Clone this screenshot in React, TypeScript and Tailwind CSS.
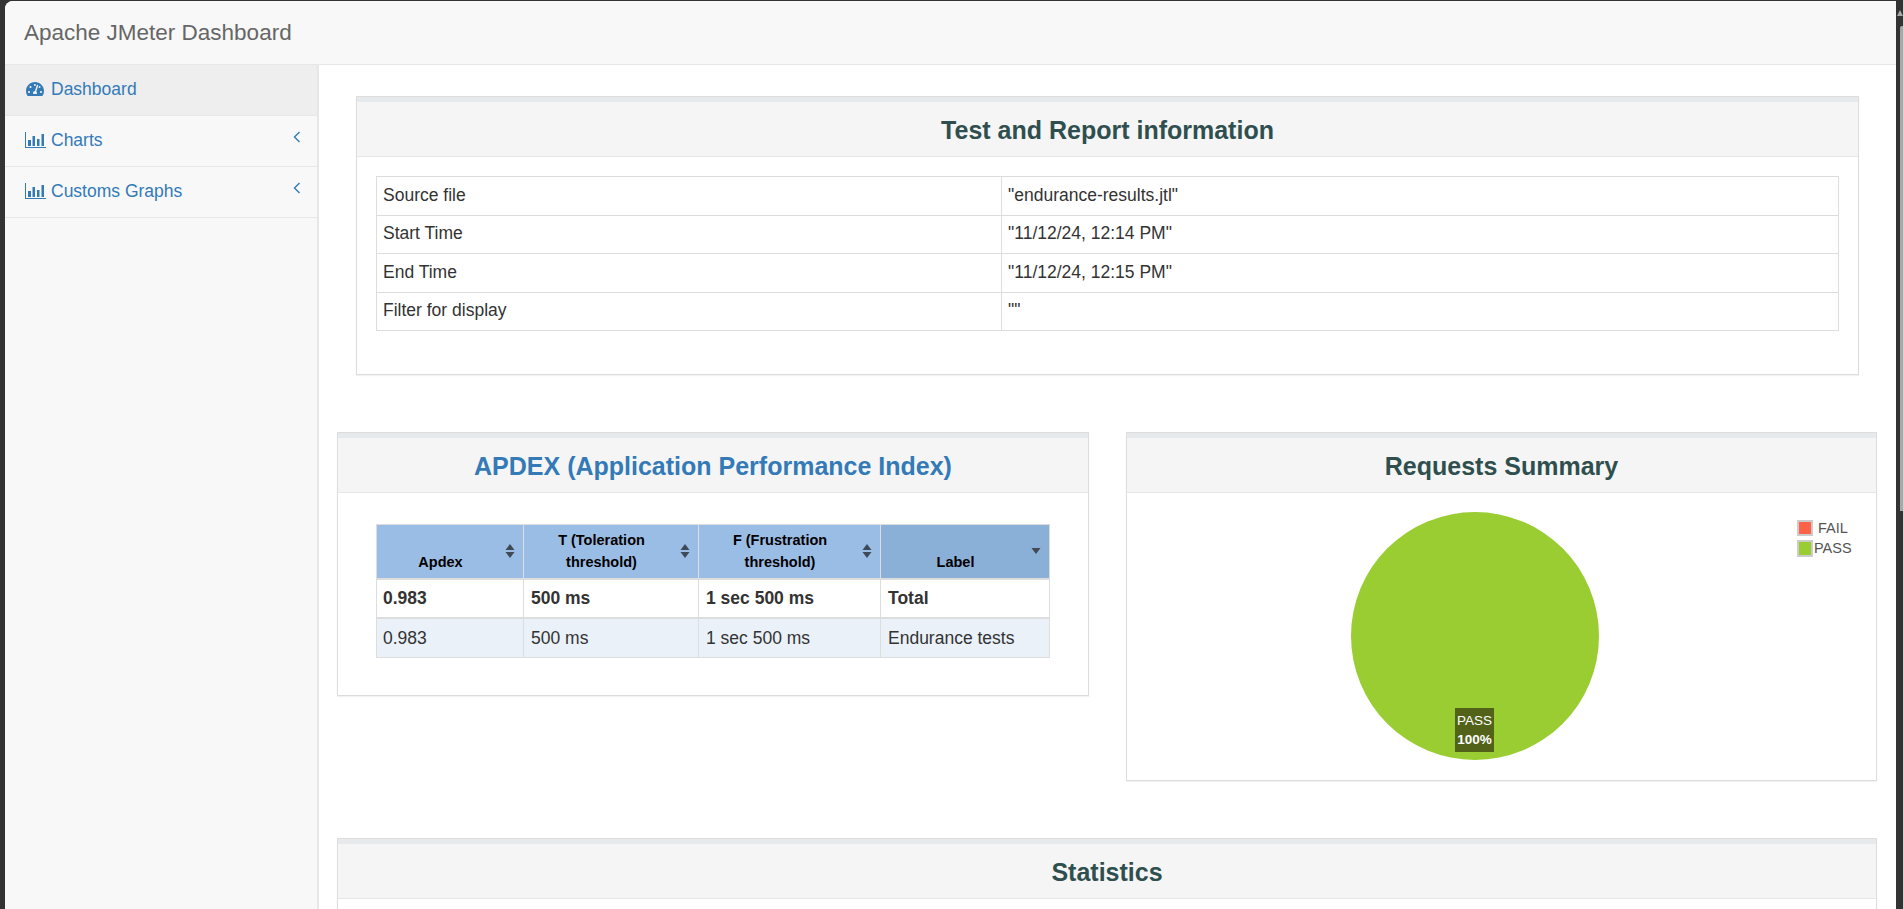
import { FaTachometerAlt } from "react-icons/fa";
import type { ReactNode } from "react";

function BarsIcon() {
  return (
    <svg viewBox="0 0 21 16" className="h-[16px] w-[21px] fill-[#337ab7]">
      <path d="M0 0h1v15h20v1H0z" />
      <path d="M3 8h3v6H3zM7.5 4h2.500v10H7.500zM12 7h2.500v7H12zM16.500 2H19v12h-2.500z" />
    </svg>
  );
}

function AngleIcon() {
  return (
    <svg viewBox="0 0 8 12" className="mb-[6px] h-[12px] w-[8px] fill-none stroke-[#337ab7] stroke-[1.4]">
      <path d="M6.500 1L1.500 6l5 5" />
    </svg>
  );
}

function SortIcon({ down }: { down?: boolean }) {
  return (
    <svg viewBox="0 0 10 14" className="absolute right-[8px] top-1/2 h-[14px] w-[10px] -translate-y-1/2 fill-[#3f4a55]">
      {!down && <path d="M5 0l4.500 6H.5z" />}
      <path d={down ? "M.5 4h9L5 10z" : "M5 14l4.500-6H.5z"} />
    </svg>
  );
}

function SideItem({ icon, label, active, arrow }: { icon: ReactNode; label: string; active?: boolean; arrow?: boolean }) {
  return (
    <div className={`flex h-[51px] items-center border-b border-[#e7e7e7] pr-[16px] pb-[2px] pl-[20px] text-[17.500px] text-[#337ab7] ${active ? "bg-[#eeeeee]" : ""}`}>
      <span className="flex w-[26px] shrink-0 items-center">{icon}</span>
      <span className="flex-1">{label}</span>
      {arrow && <AngleIcon />}
    </div>
  );
}

function Panel({ title, titleClass, className, children }: { title: string; titleClass?: string; className?: string; children?: ReactNode }) {
  return (
    <section className={`border border-[#dddddd] bg-white shadow-[0_1px_1px_rgba(0,0,0,0.05)] ${className ?? ""}`}>
      <div className="flex h-[60px] items-center justify-center border-t-[5px] border-b border-t-[#e7eaec] border-b-[#e7e7e7] bg-[#f5f5f5] pt-[4px]">
        <h3 className={`text-[25px] font-bold ${titleClass ?? "text-[#2f4f4f]"}`}>{title}</h3>
      </div>
      {children}
    </section>
  );
}

const info = [
  ["Source file", '"endurance-results.jtl"'],
  ["Start Time", '"11/12/24, 12:14 PM"'],
  ["End Time", '"11/12/24, 12:15 PM"'],
  ["Filter for display", '""'],
];

const apdexHead = [
  { text: "Apdex", w: "w-[147px]" },
  { text: "T (Toleration threshold)", w: "w-[175px]" },
  { text: "F (Frustration threshold)", w: "w-[182px]" },
];

const thClass = "relative border border-[#dddddd] pr-[25px] pb-[5px] pl-[6px] align-bottom";
const tdClass = "border border-[#dddddd] pl-[7px] pr-[6px]";
const tdFirst = "border border-[#dddddd] px-[6px]";

export default function App() {
  return (
    <div className="flex h-[909px] w-full overflow-hidden bg-[#333333] pt-px pl-[5px] font-['Liberation_Sans',Arial,sans-serif] text-[17.500px] text-[#333333]">
      <div className="flex w-[1891px] flex-col overflow-hidden rounded-tl-[8px] bg-white">
        <header className="flex h-[64px] shrink-0 items-center border-b border-[#e7e7e7] bg-[#f8f8f8] pl-[19px] text-[22.500px] text-[#666666]">
          Apache JMeter Dashboard
        </header>
        <div className="flex min-h-0 flex-1">
          <aside className="w-[314px] shrink-0 border-r-2 border-[#e7e7e7] bg-[#f8f8f8]">
            <SideItem active label="Dashboard" icon={<FaTachometerAlt className="ml-px text-[18px]" />} />
            <SideItem arrow label="Charts" icon={<BarsIcon />} />
            <SideItem arrow label="Customs Graphs" icon={<BarsIcon />} />
          </aside>
          <main className="min-w-0 flex-1 pt-[31px] pr-[19px] pl-[18px]">
            <div className="pr-[18px] pl-[19px]">
              <Panel title="Test and Report information" className="h-[279px]">
                <div className="px-[19px] pt-[19px]">
                  <table className="w-full table-fixed border-collapse">
                    <tbody>
                      {info.map(([k, v]) => (
                        <tr key={k} className="h-[38.500px]">
                          <td className="w-[625px] border border-[#dddddd] px-[6px] pb-[2px]">{k}</td>
                          <td className="border border-[#dddddd] px-[6px] pb-[2px]">{v}</td>
                        </tr>
                      ))}
                    </tbody>
                  </table>
                </div>
              </Panel>
            </div>
            <div className="mt-[57px] flex items-start justify-between">
              <Panel title="APDEX (Application Performance Index)" titleClass="text-[#337ab7]" className="h-[264px] w-[752px]">
                <div className="px-[38px] pt-[31px]">
                  <table className="w-[674px] table-fixed border-collapse">
                    <thead>
                      <tr className="h-[54px] text-center text-[14.500px] leading-[22px] font-bold text-black">
                        {apdexHead.map((h) => (
                          <th key={h.text} className={`${thClass} bg-[#9abde6] ${h.w}`}>
                            {h.text}
                            <SortIcon />
                          </th>
                        ))}
                        <th className={`${thClass} bg-[#8bb0d8]`}>
                          Label
                          <SortIcon down />
                        </th>
                      </tr>
                    </thead>
                    <tbody>
                      <tr className="h-[39px] border-t-2 border-[#dddddd] font-bold">
                        <td className={tdFirst}>0.983</td>
                        <td className={tdClass}>500 ms</td>
                        <td className={tdClass}>1 sec 500 ms</td>
                        <td className={tdClass}>Total</td>
                      </tr>
                      <tr className="h-[40px] border-t-2 border-[#dddddd] bg-[#eaf1f9]">
                        <td className={tdFirst}>0.983</td>
                        <td className={tdClass}>500 ms</td>
                        <td className={tdClass}>1 sec 500 ms</td>
                        <td className={tdClass}>Endurance tests</td>
                      </tr>
                    </tbody>
                  </table>
                </div>
              </Panel>
              <Panel title="Requests Summary" className="w-[751px]">
                <div className="relative h-[287px]">
                  <div className="flex justify-center pt-[19px] pr-[53px]">
                    <div className="h-[248px] w-[248px] rounded-full bg-[#9acd32]" />
                  </div>
                  <div className="absolute top-[215px] left-[328px] w-[39px] bg-[#526319] py-[3px] text-center text-[13.500px] leading-[19px] text-white">
                    PASS
                    <br />
                    <b>100%</b>
                  </div>
                  <div className="absolute top-[27px] left-[670px] flex items-center gap-[5px] text-[14.500px] leading-[16px] text-[#545454]">
                    <span className="block h-[16px] w-[16px] border-2 border-[#cccccc] bg-[#ff6347]" />
                    FAIL
                  </div>
                  <div className="absolute top-[47px] left-[670px] flex items-center gap-px text-[14.500px] leading-[17px] text-[#545454]">
                    <span className="block h-[17px] w-[16px] border-2 border-[#cccccc] bg-[#9acd32]" />
                    PASS
                  </div>
                </div>
              </Panel>
            </div>
            <div className="mt-[57px]">
              <Panel title="Statistics" className="h-[200px]" />
            </div>
          </main>
        </div>
      </div>
      <div className="relative min-w-0 flex-1">
        <div className="absolute top-[25px] right-0 h-[485px] w-[3px] rounded-tl-[2px] bg-[#a8a8a8]" />
        <div className="absolute top-[9px] right-0 h-0 w-0 border-r-[3px] border-b-[6px] border-l-[3px] border-r-transparent border-b-[#a8a8a8] border-l-transparent" />
      </div>
    </div>
  );
}
